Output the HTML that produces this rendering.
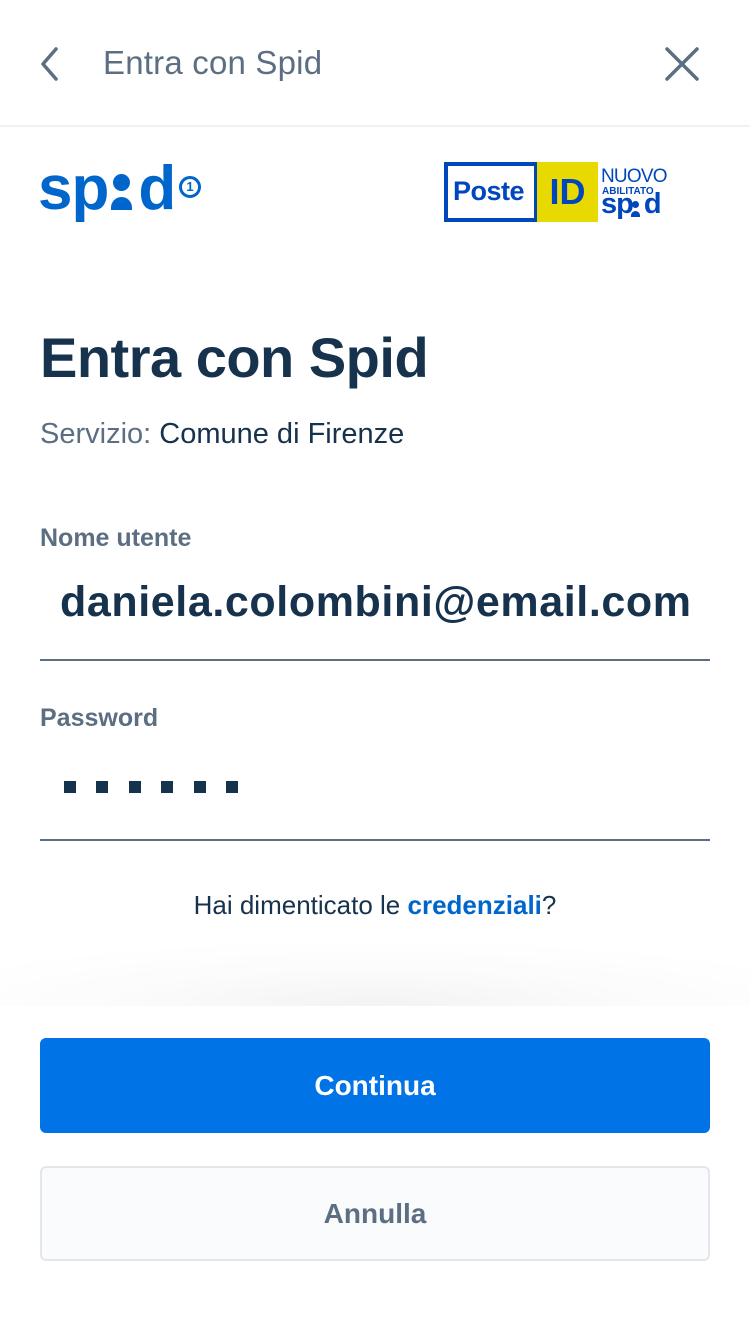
<!DOCTYPE html>
<html><head><meta charset="utf-8"><style>
*{margin:0;padding:0;box-sizing:border-box}
body{width:750px;height:1334px;background:#fff;font-family:"Liberation Sans",sans-serif;position:relative;overflow:hidden;color:#17324d}
.abs{position:absolute}
.hdr{left:0;top:0;width:750px;height:127px;border-bottom:2px solid #eef2f6}
.ht{left:103px;top:44px;font-size:33px;color:#5c6f82;letter-spacing:0.2px}
.spid{left:38px;top:153px;font-size:62px;font-weight:bold;color:#0066cc;letter-spacing:-1px;white-space:nowrap}
.h1{left:40px;top:325px;font-size:56px;font-weight:bold;letter-spacing:-0.5px}
.srv{left:40px;top:418px;font-size:29px;color:#5c6f82}
.srv b{font-weight:normal;color:#17324d}
.lbl{left:40px;font-size:25px;font-weight:bold;color:#5c6f82}
.val{left:60px;top:578px;font-size:43px;font-weight:bold;letter-spacing:0.6px}
.line{left:40px;width:670px;height:2px;background:#5c6f82}
.dot{width:12px;height:12px;background:#17324d;top:781px}
.fg{left:0;width:750px;top:890px;text-align:center;font-size:26px;color:#17324d}
.fg b{color:#0066cc}
.btn{left:40px;width:670px;height:95px;border-radius:6px;text-align:center;line-height:95px;font-size:28px;font-weight:bold}
</style></head><body>
<div class="abs hdr"></div>
<svg class="abs" style="left:36px;top:46px" width="30" height="36" viewBox="0 0 30 36"><path d="M20 3 L7 18 L20 33" fill="none" stroke="#5c6f82" stroke-width="3.5" stroke-linecap="round" stroke-linejoin="round"/></svg>
<div class="abs ht">Entra con Spid</div>
<svg class="abs" style="left:662px;top:46px" width="40" height="36" viewBox="0 0 40 36"><path d="M5 3 L35 33 M35 3 L5 33" fill="none" stroke="#5c6f82" stroke-width="3.5" stroke-linecap="round"/></svg>

<div class="abs spid">sp<span style="display:inline-block;width:30px"></span>d</div>
<div class="abs" style="left:113px;top:174px;width:17px;height:17px;border-radius:50%;background:#0066cc"></div>
<div class="abs" style="left:111px;top:197px;width:21px;height:13px;border-radius:11px 11px 0 0;background:#0066cc"></div>
<div class="abs" style="left:179px;top:176px;width:22px;height:22px;border:3px solid #0066cc;border-radius:50%;font-size:13px;font-weight:bold;color:#0066cc;text-align:center;line-height:16px">1</div>

<div class="abs" style="left:444px;top:162px;width:94px;height:60px;border:4px solid #0047bb;background:#fff"></div>
<div class="abs" style="left:453px;top:176px;font-size:27px;font-weight:bold;color:#0047bb;letter-spacing:-0.5px">Poste</div>
<div class="abs" style="left:537px;top:162px;width:61px;height:60px;background:#e8d900;color:#0047bb;font-size:36px;font-weight:bold;text-align:center;line-height:60px">ID</div>
<div class="abs" style="left:601px;top:166px;font-size:19px;color:#0047bb;letter-spacing:-0.8px">NUOVO</div>
<div class="abs" style="left:602px;top:186px;font-size:10px;font-weight:bold;color:#0047bb">ABILITATO</div>
<div class="abs" style="left:601px;top:188px;font-size:29px;font-weight:bold;color:#0047bb;letter-spacing:-1px">sp<span style="display:inline-block;width:11px"></span>d</div>
<div class="abs" style="left:632px;top:201px;width:7px;height:7px;border-radius:50%;background:#0047bb"></div>
<div class="abs" style="left:631px;top:211px;width:9px;height:6px;border-radius:5px 5px 0 0;background:#0047bb"></div>

<div class="abs h1">Entra con Spid</div>
<div class="abs srv">Servizio: <b>Comune di Firenze</b></div>

<div class="abs lbl" style="top:524px">Nome utente</div>
<div class="abs val">daniela.colombini@email.com</div>
<div class="abs line" style="top:659px"></div>

<div class="abs lbl" style="top:704px">Password</div>
<div class="abs dot" style="left:64px"></div>
<div class="abs dot" style="left:96px"></div>
<div class="abs dot" style="left:129px"></div>
<div class="abs dot" style="left:161px"></div>
<div class="abs dot" style="left:194px"></div>
<div class="abs dot" style="left:226px"></div>
<div class="abs line" style="top:839px"></div>

<div class="abs fg">Hai dimenticato le <b>credenziali</b>?</div>

<div class="abs" style="left:0;top:940px;width:750px;height:66px;background:radial-gradient(ellipse 65% 100% at 50% 100%,#f3f3f3 0%,#fbfbfb 50%,rgba(255,255,255,0) 100%)"></div>

<div class="abs btn" style="top:1038px;background:#0073e6;color:#fff">Continua</div>
<div class="abs btn" style="top:1166px;background:#f9fbfd;border:2px solid #e3e7ec;color:#5c6f82;line-height:91px">Annulla</div>
</body></html>
